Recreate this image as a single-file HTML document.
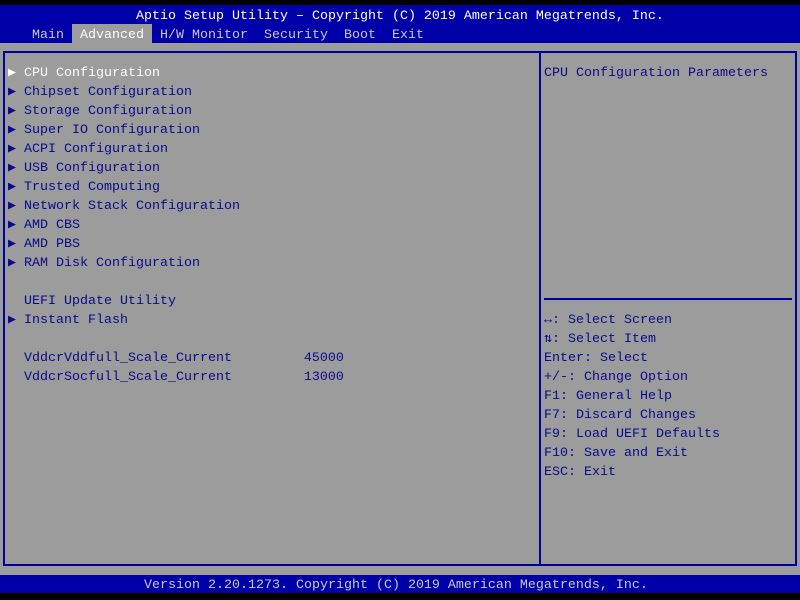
<!DOCTYPE html><html><head><style>
body{margin:0;width:800px;height:600px;background:#000;font-family:"Liberation Mono",monospace;font-size:13.33px;overflow:hidden;position:relative}
.t{position:absolute;white-space:pre;line-height:19px}
#top{position:absolute;left:0;top:5px;width:800px;height:38px;background:#0000a8}
#body{position:absolute;left:0;top:43px;width:800px;height:532px;background:#9c9c9c}
#bot{position:absolute;left:0;top:575px;width:800px;height:18px;background:#0000a8}
.fr{position:absolute;border:2px solid #0000a0}
.b{color:#0a0a8a}.w{color:#fff}.g{color:#c8c8c8}
</style></head><body>
<div id="top"></div><div id="body"></div><div id="bot"></div>
<div class="t w" style="left:136px;top:7px">Aptio Setup Utility – Copyright (C) 2019 American Megatrends, Inc.</div>
<div style="position:absolute;left:72px;top:24px;width:80px;height:19px;background:#9c9c9c"></div>
<div class="t g" style="left:32px;top:26px">Main  <span style="color:#fff">Advanced</span>  H/W Monitor  Security  Boot  Exit</div>
<div class="fr" style="left:3px;top:51px;width:790px;height:511px"></div>
<div style="position:absolute;left:539px;top:53px;width:2px;height:511px;background:#0000a0"></div>
<div style="position:absolute;left:544px;top:298px;width:248px;height:2px;background:#0000a0"></div>
<div class="t b" style="left:8px;top:64px"><span class="w">▶ CPU Configuration</span>
▶ Chipset Configuration
▶ Storage Configuration
▶ Super IO Configuration
▶ ACPI Configuration
▶ USB Configuration
▶ Trusted Computing
▶ Network Stack Configuration
▶ AMD CBS
▶ AMD PBS
▶ RAM Disk Configuration

  UEFI Update Utility
▶ Instant Flash

  VddcrVddfull_Scale_Current         45000
  VddcrSocfull_Scale_Current         13000</div>
<div class="t b" style="left:544px;top:64px">CPU Configuration Parameters</div>
<div class="t b" style="left:544px;top:311px">↔: Select Screen
⇅: Select Item
Enter: Select
+/-: Change Option
F1: General Help
F7: Discard Changes
F9: Load UEFI Defaults
F10: Save and Exit
ESC: Exit</div>
<div class="t g" style="left:144px;top:576px;line-height:19px">Version 2.20.1273. Copyright (C) 2019 American Megatrends, Inc.</div>
</body></html>
